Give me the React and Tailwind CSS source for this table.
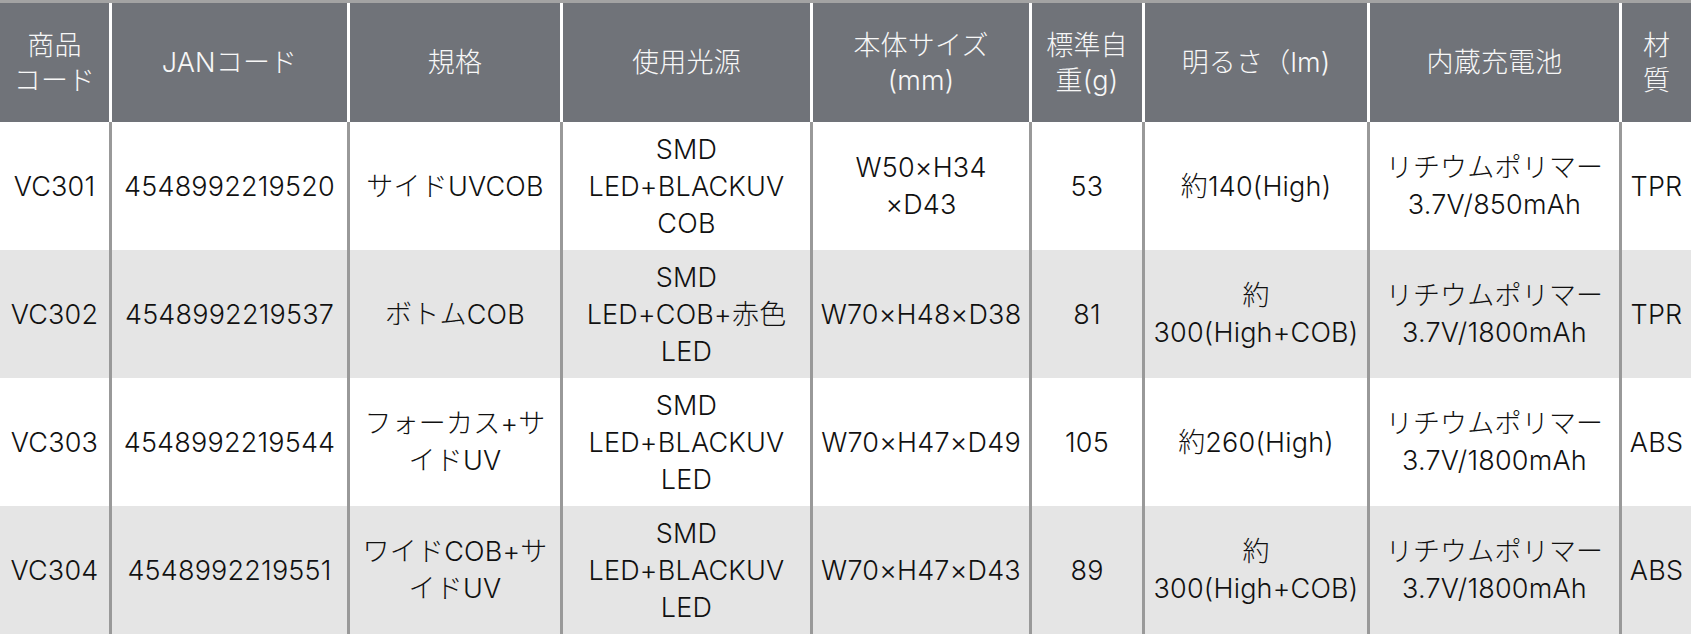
import React from 'react';

const cols = 'grid grid-cols-[109px_235px_210px_247px_216px_110px_222px_249px_1fr] gap-x-[3px]';

const headers = [
  ['商品', 'コード'],
  ['JANコード'],
  ['規格'],
  ['使用光源'],
  ['本体サイズ', '(mm)'],
  ['標準自', '重(g)'],
  ['明るさ（lm)'],
  ['内蔵充電池'],
  ['材', '質'],
];

const rows = [
  [['VC301'], ['4548992219520'], ['サイドUVCOB'], ['SMD', 'LED+BLACKUV', 'COB'], ['W50×H34', '×D43'], ['53'], ['約140(High)'], ['リチウムポリマー', '3.7V/850mAh'], ['TPR']],
  [['VC302'], ['4548992219537'], ['ボトムCOB'], ['SMD', 'LED+COB+赤色', 'LED'], ['W70×H48×D38'], ['81'], ['約', '300(High+COB)'], ['リチウムポリマー', '3.7V/1800mAh'], ['TPR']],
  [['VC303'], ['4548992219544'], ['フォーカス+サ', 'イドUV'], ['SMD', 'LED+BLACKUV', 'LED'], ['W70×H47×D49'], ['105'], ['約260(High)'], ['リチウムポリマー', '3.7V/1800mAh'], ['ABS']],
  [['VC304'], ['4548992219551'], ['ワイドCOB+サ', 'イドUV'], ['SMD', 'LED+BLACKUV', 'LED'], ['W70×H47×D43'], ['89'], ['約', '300(High+COB)'], ['リチウムポリマー', '3.7V/1800mAh'], ['ABS']],
];

const Lines = ({ lines }) => lines.map((l, i) => <div key={i}>{l}</div>);

export default function App() {
  return (
    <div className="w-[1691px] h-[635px] overflow-hidden bg-white font-['Inter','Noto_Sans_CJK_JP',sans-serif] font-light text-[27px] leading-[37px] tracking-[0.2px]">
      <div className="border-t-[3px] border-[#a3a3a3]">
        {/* header */}
        <div className={`${cols} bg-white h-[119px]`}>
          {headers.map((h, i) => (
            <div key={i} className="bg-[#707379] text-[#f7f7f7] flex flex-col items-center justify-center text-center leading-[35px]">
              <Lines lines={h} />
            </div>
          ))}
        </div>

        {/* body */}
        {rows.map((r, ri) => (
          <div key={ri} className={`${cols} bg-[#999999] h-[128px]`}>
            {r.map((c, ci) => (
              <div
                key={ci}
                className={`${ri % 2 === 0 ? 'bg-white' : 'bg-[#e5e5e5]'} text-[#111111] flex flex-col items-center justify-center text-center whitespace-nowrap`}
              >
                <Lines lines={c} />
              </div>
            ))}
          </div>
        ))}
      </div>
    </div>
  );
}
